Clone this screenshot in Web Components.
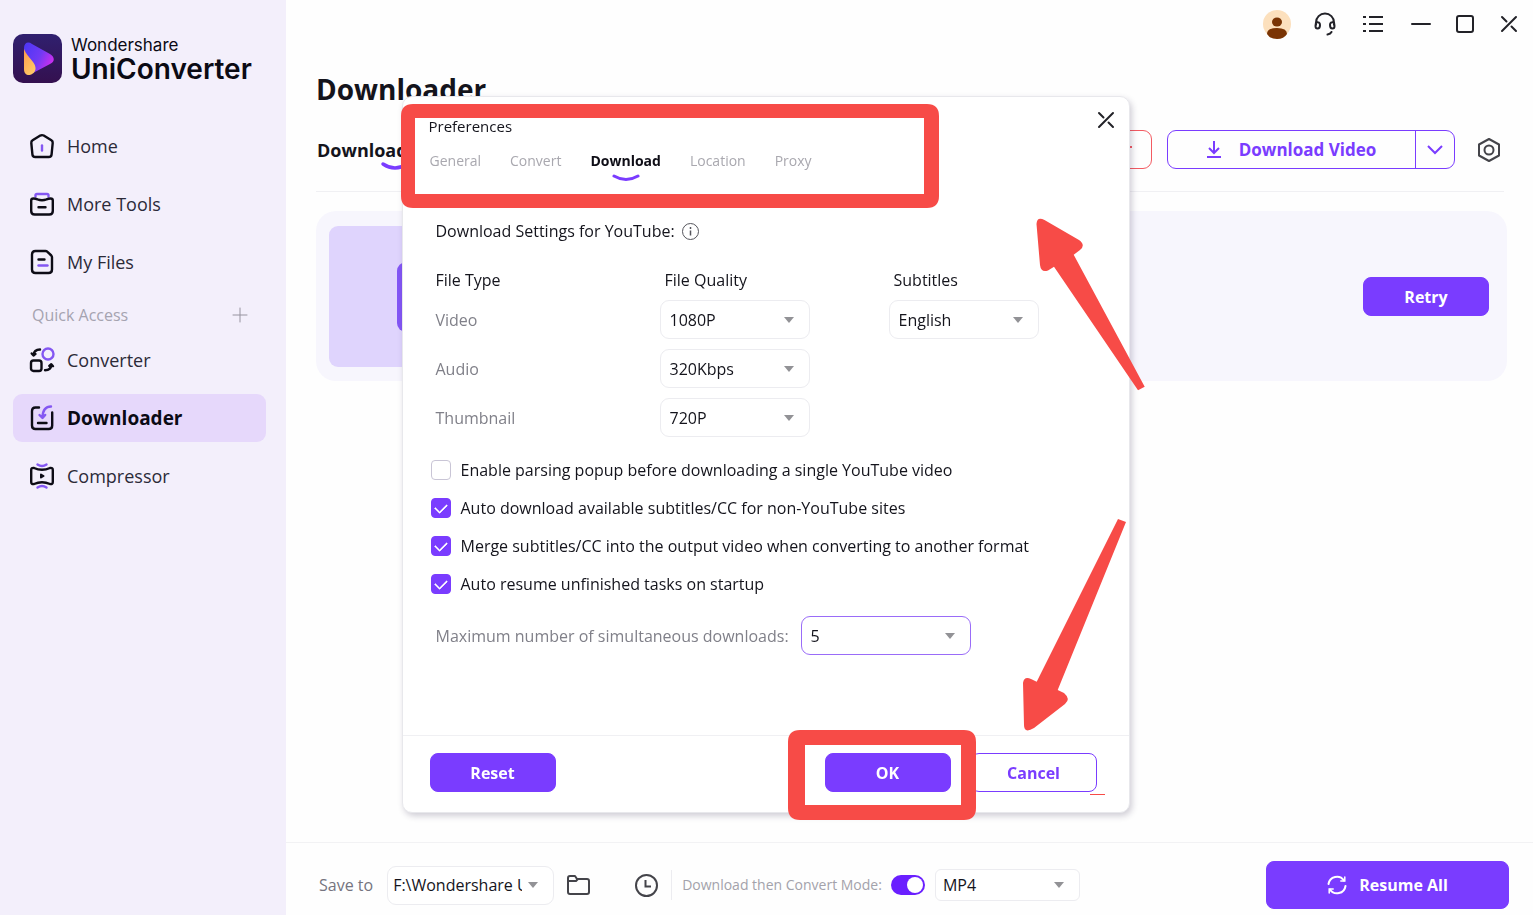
<!DOCTYPE html>
<html lang="en">
<head>
<meta charset="utf-8">
<meta name="viewport" content="width=device-width, initial-scale=1">
<title>UniConverter - Downloader</title>
<style>
  html, body {
    margin: 0;
    min-height: 100%;
  }

  body {
    --accent: #7a3cff;
    --mark: #f74b47;
    --line: #ececf0;
    background: #fefefe;
    color: #14141c;
    font-family: "Open Sans", "Noto Sans", sans-serif;
    font-size: 16px;
    line-height: 20px;
  }
</style>
</head>
<body>
<app-window></app-window>

<script>
const controls = `
  * { box-sizing: border-box; }
  button, select, input { font: inherit; color: inherit; margin: 0; }
  button {
    display: inline-flex;
    align-items: center;
    justify-content: center;
    background: none;
    border: 0;
    padding: 0;
    cursor: pointer;
  }
  svg { display: block; flex: none; overflow: visible; }
  .pick { position: relative; display: block; }
  .pick::after {
    content: '';
    position: absolute;
    right: 16px;
    top: calc(50% - 3px);
    border: 5px solid transparent;
    border-top: 6px solid #929296;
    border-bottom: 0;
    pointer-events: none;
  }
  select {
    appearance: none;
    display: block;
    width: 100%;
    height: 39px;
    padding: 0 36px 0 9px;
    border: 1px solid var(--line);
    border-radius: 9px;
    background: #fff;
    outline: 0;
  }
`;

function define(name, styles, markup, setup) {
  const template = document.createElement('template');
  template.innerHTML = `<style>${controls}${styles}</style>${markup}`;

  customElements.define(name, class extends HTMLElement {
    constructor() {
      super();
      this.attachShadow({ mode: 'open' });
      this.shadowRoot.appendChild(template.content.cloneNode(true));
    }

    connectedCallback() {
      if (setup) setup(this, this.shadowRoot);
    }
  });
}

define('brand-logo', `
  :host {
    display: flex;
    align-items: center;
    gap: 9px;
    font-family: Inter, sans-serif;
    color: #0b0a14;
  }
  .maker { font-size: 17px; line-height: 20px; }
  .product { font-size: 28px; line-height: 28px; font-weight: 600; }
`, `
  <svg width="49" height="49" viewBox="0 0 49 49" aria-hidden="true">
    <defs>
      <linearGradient id="tile" x1="0" y1="0" x2="0" y2="1">
        <stop offset="0" stop-color="#30206f"/><stop offset="1" stop-color="#34104f"/>
      </linearGradient>
      <linearGradient id="play" x1="0" y1="0" x2="1" y2=".5">
        <stop offset="0" stop-color="#4b36f5"/><stop offset=".6" stop-color="#713af4"/><stop offset="1" stop-color="#c52ff0"/>
      </linearGradient>
      <linearGradient id="drop" x1="0" y1="0" x2=".6" y2="1">
        <stop offset="0" stop-color="#ff9b4b"/><stop offset="1" stop-color="#ffc766"/>
      </linearGradient>
    </defs>
    <rect width="49" height="49" rx="10" fill="url(#tile)"/>
    <path d="M11 14c0-5 4-7 8-4l18 10c5 3 5 8 0 10L20 39 11 16z" fill="url(#play)"/>
    <path d="M11 15c2 5 5 8 9 13 6 8 0 13-4 13-3 0-5-2-5-6z" fill="url(#drop)"/>
  </svg>
  <div>
    <div class="maker">Wondershare</div>
    <div class="product">UniConverter</div>
  </div>
`);

define('nav-item', `
  :host { display: block; }
  a {
    display: flex;
    align-items: center;
    gap: 12px;
    height: 48px;
    padding: 0 16px;
    border-radius: 9px;
    color: #2b2a38;
    font-size: 18px;
    text-decoration: none;
  }
  :host([active]) a { background: #e6d8fb; color: #0b0a14; font-weight: 700; font-size: 19px; }
  ::slotted(svg) { display: block; flex: none; overflow: visible; }
`, `
  <a href="#"><slot name="icon"></slot><slot></slot></a>
`);

define('side-bar', `
  :host {
    display: block;
    padding: 34px 20px 34px 13px;
    background: #f3effb;
  }
  nav {
    display: flex;
    flex-direction: column;
    gap: 10px;
    margin-top: 39px;
  }
  .quick {
    display: flex;
    align-items: center;
    justify-content: space-between;
    height: 30px;
    padding: 8px 19px 0;
    color: #a5a3b0;
    font-size: 16px;
  }
  nav svg {
    fill: none;
    stroke: #0d0c16;
    stroke-width: 2.4;
    stroke-linecap: round;
    stroke-linejoin: round;
  }
  .tint { stroke: #8457f2; }
`, `
  <brand-logo></brand-logo>
  <nav>
    <nav-item>
      <svg slot="icon" width="26" height="26" viewBox="0 0 26 26"><path d="M11.3 2.6 3.6 7.3Q2.1 8.2 2.3 10l1.1 11.3Q3.600 24 6.300 24h13.400q2.700 0 2.900-2.700L23.700 10q.2-1.800-1.300-2.700l-7.700-4.700q-1.700-1-3.400 0z"/><path class="tint" d="M13 12.500v5"/></svg>
      Home
    </nav-item>
    <nav-item>
      <svg slot="icon" width="26" height="26" viewBox="0 0 26 26"><path class="tint" d="M6.500 5.500V4.300Q6.500 3 8 3h10q1.500 0 1.500 1.300v1.200"/><path d="M2.200 9.500Q2.200 7.500 4.500 7.500q2 0 4 .9 4.500 1.700 9 0 2-.9 4-.9 2.300 0 2.300 2V20q0 3.500-3.500 3.500H5.700Q2.200 23.500 2.200 20zM9.500 16.200h7"/></svg>
      More Tools
    </nav-item>
    <nav-item>
      <svg slot="icon" width="26" height="26" viewBox="0 0 26 26"><path d="M6.500 2h10Q17.500 2 18.200 2.700L22.300 6.500Q23 7.200 23 8.200v12.300q0 3.500-3.500 3.500h-13Q3 24 3 20.500v-15Q3 2 6.500 2zM9.500 10.500h6"/><path class="tint" d="M9.500 16.500h9"/></svg>
      My Files
    </nav-item>
    <div class="quick">
      Quick Access
      <button aria-label="Add quick access"><svg width="14" height="14" viewBox="0 0 14 14" style="stroke:#96939f;stroke-width:1"><path d="M7 0v14M0 7h14"/></svg></button>
    </div>
    <nav-item>
      <svg slot="icon" width="26" height="26" viewBox="0 0 26 26"><circle class="tint" cx="19" cy="7" r="5.500"/><rect x="2" y="13.500" width="10.500" height="10.500" rx="2.500"/><path d="M11 2.500Q5 2.800 4.500 8M2.700 6.500l1.800 2 2-1.600M16 23.300q6-.3 6.300-5.300M20.300 19l2-1.800 1.700 2"/></svg>
      Converter
    </nav-item>
    <nav-item active>
      <svg slot="icon" width="26" height="26" viewBox="0 0 26 26"><path d="M10 2.500H6.500Q3 2.500 3 6v14.500Q3 24 6.500 24h13.200q3.500 0 3.500-3.500V7.500M9 18h8.500"/><path class="tint" d="M22 1.500q-8 0-8.500 10.500M10.500 10l3 3 2.700-3"/></svg>
      Downloader
    </nav-item>
    <nav-item>
      <svg slot="icon" width="26" height="26" viewBox="0 0 26 26"><path class="tint" d="M8.500 1.500q4.500 3 9 0M8.500 24.500q4.500-3 9 0"/><path d="M5 5q8 3.500 16 0 2.800-.6 2.800 2v12q0 2.600-2.800 2-8-3.500-16 0-2.800.6-2.800-2V7Q2.200 4.400 5 5z"/><path fill="#0d0c16" stroke-width="2" d="M12 11.500l2.500 1.500-2.500 1.500z"/></svg>
      Compressor
    </nav-item>
  </nav>
`);

define('window-controls', `
  :host {
    display: flex;
    align-items: center;
    justify-content: flex-end;
    gap: 20px;
    height: 48px;
    padding-right: 10px;
  }
  .frame { display: flex; gap: 16px; }
  button { width: 28px; height: 28px; }
  button svg { fill: none; stroke: #222228; stroke-width: 2; stroke-linecap: round; stroke-linejoin: round; }
`, `
  <button aria-label="Account">
    <svg width="28" height="28" viewBox="0 0 28 28" style="stroke:none"><circle cx="14" cy="14" r="14" fill="#fce0bd"/><ellipse cx="14" cy="12" rx="5" ry="4.500" fill="#7a3404"/><path d="M4 24q0-6 10-6t10 6q-3 5-10 5T4 24z" fill="#7a3404"/></svg>
  </button>
  <button aria-label="Support">
    <svg width="22" height="24" viewBox="0 0 22 24"><path d="M2 13v-2.500a9 9 0 0 1 18 0V13M2 10.500q4-1 4 2.500t-2.500 3.500Q1.500 16.500 1.500 14zM20 10.500q-4-1-4 2.500t2.500 3.500q2 0 2-2.500zM17.500 20q-1 2-4 2.500"/></svg>
  </button>
  <button aria-label="Menu">
    <svg width="20" height="18" viewBox="0 0 20 18" style="stroke-linecap:butt"><path d="M0 2h3M6 2h14M0 9h3M6 9h14M0 16h3M6 16h14"/></svg>
  </button>
  <div class="frame">
    <button aria-label="Minimize">
      <svg width="18" height="18" viewBox="0 0 18 18"><path d="M0 9h18"/></svg>
    </button>
    <button aria-label="Maximize">
      <svg width="18" height="18" viewBox="0 0 18 18"><rect x="1" y="1" width="16" height="16" rx="2"/></svg>
    </button>
    <button aria-label="Close">
      <svg width="16" height="16" viewBox="0 0 16 16"><path d="M1 1l4.500 4.500M10.500 10.500 15 15M15 1 1 15"/></svg>
    </button>
  </div>
`);

define('action-button', `
  :host { display: inline-block; min-width: 126px; }
  button {
    width: 100%;
    height: 39px;
    gap: 12px;
    border: 1px solid var(--accent);
    border-radius: 8px;
    background: var(--accent);
    color: #fff;
    font-weight: 700;
  }
  :host([outline]) button { background: #fff; color: var(--accent); }
  :host([large]) button { height: 48px; }
`, `
  <button><slot name="icon"></slot><slot></slot></button>
`);

define('tool-bar', `
  :host {
    display: flex;
    align-items: center;
    gap: 15px;
    height: 84px;
    margin-right: 3px;
    padding: 0 3px 0 1px;
    border-bottom: 1px solid #f0f0f3;
  }
  .tab {
    position: relative;
    margin-right: auto;
    font-size: 18px;
    font-weight: 700;
  }
  .tab svg { position: absolute; left: 64px; top: 22px; }
  .limit {
    width: 130px;
    height: 39px;
    justify-content: flex-end;
    padding: 0 19px 6px 0;
    border: 1px solid #f35b62;
    border-radius: 9px;
  }
  .split {
    display: flex;
    height: 39px;
    border: 1px solid var(--accent);
    border-radius: 9px;
    color: var(--accent);
  }
  .split .main { width: 247px; gap: 18px; font-size: 17px; font-weight: 700; }
  .split .more { width: 39px; border-left: 1px solid var(--accent); }
  .settings { width: 24px; margin-left: 7px; }
`, `
  <button class="tab">Downloading
    <svg width="28" height="8" viewBox="0 0 28 8" fill="none" stroke="#7a3cff" stroke-width="3.500" stroke-linecap="round"><path d="M2 2q12 8 24 0"/></svg>
  </button>
  <button class="limit" aria-label="Limit">
    <svg width="4" height="2" viewBox="0 0 4 2"><path d="M0 1h4" stroke="#f35b62" stroke-width="2"/></svg>
  </button>
  <div class="split">
    <button class="main">
      <svg width="14" height="18" viewBox="0 0 14 18" fill="none" stroke="#7a3cff" stroke-width="2"><path d="M7 0v12M2 7l5 5 5-5M0 16h14"/></svg>
      Download Video
    </button>
    <button class="more" aria-label="More download options">
      <svg width="16" height="9" viewBox="0 0 16 9" fill="none" stroke="#7a3cff" stroke-width="2"><path d="M1 1l7 7 7-7"/></svg>
    </button>
  </div>
  <button class="settings" aria-label="Preferences">
    <svg width="22" height="24" viewBox="0 0 22 24" fill="none" stroke="#44444a" stroke-width="2" stroke-linejoin="round"><path d="M11 1l10 5.500v11L11 23 1 17.500v-11z"/><circle cx="11" cy="12" r="4.500"/></svg>
  </button>
`);

define('download-card', `
  :host {
    display: flex;
    align-items: center;
    justify-content: space-between;
    margin-top: 19px;
    padding: 15px 18px 14px 13px;
    border-radius: 20px;
    background: #f7f6fd;
  }
  .thumb {
    display: grid;
    place-items: center;
    width: 250px;
    height: 141px;
    border-radius: 9px;
    background: #dfd4fd;
  }
  .thumb i { width: 114px; height: 70px; border-radius: 9px; background: #8356f5; }
`, `
  <div class="thumb"><i></i></div>
  <action-button>Retry</action-button>
`);

define('status-bar', `
  :host {
    display: flex;
    align-items: center;
    height: 73px;
    padding: 12px 24px 0 33px;
    border-top: 1px solid #f2f2f4;
  }
  label { color: #75747e; }
  .folder { width: 167px; margin: 0 13px 0 14px; }
  .folder select { padding: 0 31px 0 5px; }
  .history { margin-left: 45px; padding-right: 13px; height: 30px; border-right: 1px solid var(--line); }
  .mode { margin: 0 9px 0 10px; color: #a3a2ab; font-size: 14px; }
  input {
    appearance: none;
    display: block;
    width: 34px;
    height: 20px;
    padding: 2px;
    border-radius: 10px;
    background: #6a1fff;
  }
  input::before {
    content: '';
    display: block;
    width: 16px;
    height: 16px;
    margin-left: auto;
    border-radius: 50%;
    background: #fff;
  }
  .format { width: 145px; margin-left: 10px; }
  .format select { height: 32px; padding-left: 7px; border-radius: 6px; }
  action-button { width: 243px; margin-left: auto; }
`, `
  <label for="folder">Save to</label>
  <div class="pick folder"><select id="folder"><option>F:\\Wondershare UniConverter</option></select></div>
  <button aria-label="Open folder">
    <svg width="23" height="20" viewBox="0 0 23 20" fill="none" stroke="#44444a" stroke-width="2" stroke-linejoin="round"><path d="M1 6V3q0-2 2-2h5l2 3h10q2 0 2 2v11q0 2-2 2H3q-2 0-2-2zM1 6h8l2-2"/></svg>
  </button>
  <button class="history" aria-label="History">
    <svg width="23" height="23" viewBox="0 0 23 23" fill="none" stroke="#44444a" stroke-width="2"><circle cx="11.500" cy="11.500" r="10.500"/><path d="M10.500 6v6.500H16"/></svg>
  </button>
  <label class="mode" for="convert">Download then Convert Mode:</label>
  <input id="convert" type="checkbox" role="switch" checked>
  <div class="pick format"><select aria-label="Convert format"><option>MP4</option></select></div>
  <action-button large>
    <svg slot="icon" width="20" height="20" viewBox="0 0 20 20" fill="none" stroke="#fff" stroke-width="2" stroke-linecap="round"><path d="M1.500 9A8.500 8.500 0 0 1 17 5.500M18.500 11A8.500 8.500 0 0 1 3 14.500"/><path d="M17.800 2v4h-4M2.200 18v-4h4" stroke-width="1.500"/></svg>
    Resume All
  </action-button>
`);

define('check-option', `
  :host { display: block; }
  label { display: flex; align-items: center; gap: 10px; }
  input {
    appearance: none;
    display: grid;
    place-items: center;
    width: 20px;
    height: 20px;
    border: 1px solid #c9c5d6;
    border-radius: 4px;
    background: #fff;
  }
  input:checked { border-color: var(--accent); background: var(--accent); }
  input:checked::before {
    content: '';
    width: 10px;
    height: 6px;
    border: solid #fff;
    border-width: 0 0 2px 2px;
    border-radius: 1px;
    transform: translateY(-1px) rotate(-45deg);
  }
`, `
  <label><input type="checkbox"><slot></slot></label>
`, (host, root) => {
  root.querySelector('input').checked = host.hasAttribute('checked');
});

// Red frames and arrows drawn over the dialog, in dialog coordinates
define('callout-marks', `
  :host { position: absolute; inset: -1px; pointer-events: none; }
  svg { fill: var(--mark); }
`, `
  <svg width="728" height="717" viewBox="0 0 728 717" aria-hidden="true">
    <path fill-rule="evenodd" d="M11 8h514q12 0 12 12v80q0 12-12 12H11q-12 0-12-12V20Q-1 8 11 8zM13 22v76h509V22z"/>
    <path fill-rule="evenodd" d="M398 634h164q12 0 12 12v66q0 12-12 12H398q-12 0-12-12v-66q0-12 12-12zM403 649v60h156v-60z"/>
    <path d="M634.500 128Q635 120 642.500 124L677 144Q684 149 678 154L671.700 158.700 742.700 290.700 736 294.300 652 170.700 646 174.500Q639 177 638 169z"/>
    <path d="M716 423 724 426 655.700 594 662 597Q669 603 663 608L632 632Q622 638 622 629L621 587Q622 580 629 583L634.700 585.700z"/>
    <path d="M688 698h15v1h-15z"/>
  </svg>
`);

define('preferences-dialog', `
  :host {
    position: relative;
    display: flex;
    flex-direction: column;
    width: 728px;
    min-height: 717px;
    border: 1px solid #e8e8ec;
    border-radius: 10px;
    background: #fff;
    box-shadow: 2px 3px 6px rgba(40, 30, 70, .22);
    box-sizing: border-box;
  }
  header {
    display: flex;
    align-items: flex-start;
    justify-content: space-between;
    padding: 13px 13px 0 26px;
  }
  h2 { margin: 6px 0 0; font-size: 15px; font-weight: 400; line-height: 20px; }
  .close { width: 20px; height: 20px; }
  .tabs { display: flex; gap: 29px; padding: 15px 27px 0; }
  .tabs button { position: relative; color: #a9a8af; font-size: 14px; line-height: 20px; }
  .tabs .on { color: #0e0d16; font-weight: 700; }
  .tabs svg { position: absolute; left: calc(50% - 14px); top: 23px; }
  .body { flex: 1; padding: 48px 28px 0; }
  h3 {
    display: flex;
    align-items: center;
    gap: 7px;
    margin: 0 0 18px 5px;
    font-size: 16px;
    font-weight: 400;
    line-height: 24px;
  }
  table { border-collapse: collapse; margin-bottom: 18px; text-align: left; }
  th { padding: 0 0 0 5px; font-weight: 400; }
  thead th { height: 34px; padding-top: 4px; }
  tbody th { width: 229px; color: #808089; }
  td { width: 229px; height: 49px; padding: 0 79px 0 0; }
  td:last-child { width: 150px; padding: 0; }
  .options { display: grid; gap: 18px; }
  .max { display: flex; align-items: center; gap: 12px; margin: 22px 0 0 5px; color: #808089; }
  .max .pick { width: 170px; color: #14141c; }
  .max select { border-color: #9a6cf8; }
  footer {
    display: flex;
    gap: 20px;
    padding: 17px 32px 20px 27px;
    border-top: 1px solid #f0f0f3;
  }
  footer action-button:first-child { margin-right: auto; }
`, `
  <header>
    <h2>Preferences</h2>
    <button class="close" aria-label="Close">
      <svg width="16" height="16" viewBox="0 0 16 16" fill="none" stroke="#222228" stroke-width="2" stroke-linecap="round"><path d="M1 1l4.500 4.500M10.500 10.500 15 15M15 1 1 15"/></svg>
    </button>
  </header>
  <div class="tabs">
    <button>General</button>
    <button>Convert</button>
    <button class="on">Download
      <svg width="28" height="8" viewBox="0 0 28 8" fill="none" stroke="#7a3cff" stroke-width="3" stroke-linecap="round"><path d="M2 2q12 7 24 0"/></svg>
    </button>
    <button>Location</button>
    <button>Proxy</button>
  </div>
  <div class="body">
    <h3>Download Settings for YouTube:
      <svg width="17" height="17" viewBox="0 0 17 17" fill="none" stroke="#55555c"><circle cx="8.500" cy="8.500" r="8"/><path d="M8.500 7.500v5M8.500 4v2" stroke-width="1.500"/></svg>
    </h3>
    <table>
      <thead>
        <tr><th>File Type</th><th>File Quality</th><th>Subtitles</th></tr>
      </thead>
      <tbody>
        <tr>
          <th><label for="video">Video</label></th>
          <td><div class="pick"><select id="video"><option>1080P</option></select></div></td>
          <td><div class="pick"><select aria-label="Subtitles"><option>English</option></select></div></td>
        </tr>
        <tr>
          <th><label for="audio">Audio</label></th>
          <td><div class="pick"><select id="audio"><option>320Kbps</option></select></div></td>
          <td></td>
        </tr>
        <tr>
          <th><label for="thumbnail">Thumbnail</label></th>
          <td><div class="pick"><select id="thumbnail"><option>720P</option></select></div></td>
          <td></td>
        </tr>
      </tbody>
    </table>
    <div class="options">
      <check-option>Enable parsing popup before downloading a single YouTube video</check-option>
      <check-option checked>Auto download available subtitles/CC for non-YouTube sites</check-option>
      <check-option checked>Merge subtitles/CC into the output video when converting to another format</check-option>
      <check-option checked>Auto resume unfinished tasks on startup</check-option>
    </div>
    <div class="max">
      <label for="max">Maximum number of simultaneous downloads:</label>
      <div class="pick"><select id="max"><option>5</option></select></div>
    </div>
  </div>
  <footer>
    <action-button>Reset</action-button>
    <action-button>OK</action-button>
    <action-button outline>Cancel</action-button>
  </footer>
  <callout-marks></callout-marks>
`);

define('app-window', `
  :host {
    display: grid;
    grid-template-columns: 286px 1fr;
    min-height: 100vh;
  }
  main { display: flex; flex-direction: column; }
  .content { flex: 1; padding: 0 26px 0 30px; }
  h1 { margin: 0; padding: 31px 0 9px; font-size: 28px; line-height: 20px; }
  .overlay {
    position: fixed;
    inset: 0;
    display: grid;
    place-items: center;
    padding: 0 2px 6px 0;
  }
`, `
  <side-bar></side-bar>
  <main>
    <window-controls></window-controls>
    <div class="content">
      <h1>Downloader</h1>
      <tool-bar></tool-bar>
      <download-card></download-card>
    </div>
    <status-bar></status-bar>
  </main>
  <div class="overlay">
    <preferences-dialog role="dialog" aria-label="Preferences"></preferences-dialog>
  </div>
`);
</script>
</body>
</html>
